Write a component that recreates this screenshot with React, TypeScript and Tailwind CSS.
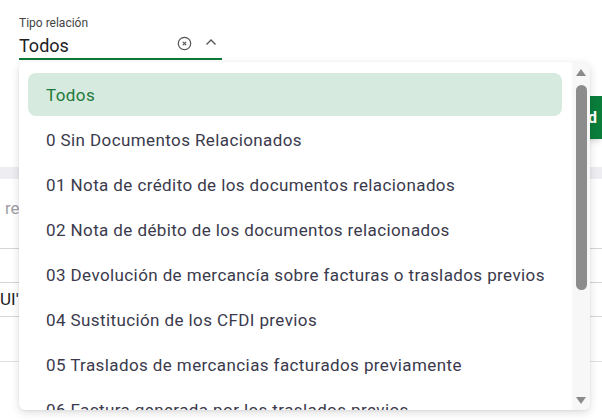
import React from "react";

const opciones = [
  "Todos",
  "0 Sin Documentos Relacionados",
  "01 Nota de crédito de los documentos relacionados",
  "02 Nota de débito de los documentos relacionados",
  "03 Devolución de mercancía sobre facturas o traslados previos",
  "04 Sustitución de los CFDI previos",
  "05 Traslados de mercancias facturados previamente",
  "06 Factura generada por los traslados previos",
];

const SelectTipoRelacion = ({ value }: { value: string }) => (
  <div className="relative w-[203px]">
    <div className="text-[12px] leading-[14px] text-[#444]">Tipo relación</div>
    <div className="flex items-center h-[30px] border-b-2 border-[#0b7a37]">
      <span className="flex-1 text-[18px] text-[#222] pt-[2px]">{value}</span>
      <svg width="15" height="15" viewBox="0 0 16 16" className="mr-[13px] mt-[-1px]">
        <circle cx="8" cy="8" r="6.6" fill="none" stroke="#555" strokeWidth="1.3" />
        <path d="M6.2 6.2l3.6 3.6M9.8 6.2l-3.6 3.6" stroke="#555" strokeWidth="1.3" />
      </svg>
      <svg width="12" height="8" viewBox="0 0 12 8" className="mr-[5px] mt-[-4px]">
        <path d="M1.5 6.5L6 2l4.5 4.5" fill="none" stroke="#555" strokeWidth="1.4" />
      </svg>
    </div>
  </div>
);

export default function App() {
  const seleccionado = "Todos";

  return (
    <div className="relative w-[602px] h-[420px] overflow-hidden bg-white font-['Roboto',sans-serif]">
      {/* page behind the open menu */}
      <div className="flex flex-col">
        <div className="pt-[16px] pl-[19px]">
          <SelectTipoRelacion value={seleccionado} />
        </div>
        <div className="flex justify-end mt-[36px]">
          <div className="w-[24px] h-[43px] bg-[#0a7d3b] rounded-l-[4px] flex items-center pl-[1px] text-white font-bold text-[16px] shadow-md">nd</div>
        </div>
        <div className="mt-[28px] h-[12px] bg-[#eeeef2]" />
        <div className="h-[70px] border-b border-[#d5d5d9] flex items-center pl-[5px] text-[17px] text-[#a0a0a6] pb-[10px]">re</div>
        <div className="h-[34px] border-b border-[#d5d5d9]" />
        <div className="h-[34px] border-b border-[#d5d5d9] flex items-center text-[17px] text-[#222]">UI'</div>
        <div className="h-[45px] border-b border-[#e2e2e6]" />
      </div>

      {/* dropdown menu */}
      <div className="absolute left-[19px] top-[62px] w-[571px] h-[348px] bg-white rounded-[6px] shadow-[0_3px_10px_rgba(0,0,0,0.12),0_1px_3px_rgba(0,0,0,0.06)] flex overflow-hidden">
        <ul className="flex-1 flex flex-col gap-[2px] pt-[11px] pl-[9px] pr-[10px]">
          {opciones.map((op) => (
            <li
              key={op}
              className={`shrink-0 h-[43px] flex items-center pl-[18px] pt-[2px] rounded-[8px] text-[17px] tracking-[0.4px] whitespace-nowrap ${
                op === seleccionado ? "bg-[#d6eadf] text-[#1e7a3a]" : "text-[#3a3a4c]"
              }`}
            >
              {op}
            </li>
          ))}
        </ul>
        <div className="w-[18px] bg-[#f7f7f7] flex flex-col items-center">
          <svg width="12" height="9" viewBox="0 0 12 9" className="mt-[6px]">
            <path d="M1 8h10L6 1z" fill="#8a8a8a" />
          </svg>
          <div className="mt-[8px] w-[11px] h-[205px] rounded-full bg-[#8c8c8c]" />
          <div className="flex-1" />
          <svg width="12" height="9" viewBox="0 0 12 9" className="mb-[5px]">
            <path d="M1 1h10L6 8z" fill="#8a8a8a" />
          </svg>
        </div>
      </div>
    </div>
  );
}
